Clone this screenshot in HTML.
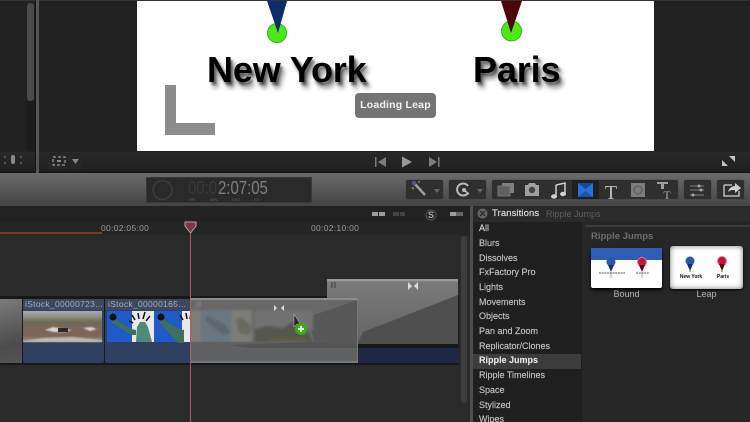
<!DOCTYPE html>
<html><head><meta charset="utf-8">
<style>
html,body{margin:0;padding:0;background:#262626}
#p{position:relative;width:750px;height:422px;overflow:hidden;background:#272727;font-family:"Liberation Sans",sans-serif;filter:blur(.35px)}
#p div,#p span{position:absolute}
.t{white-space:nowrap}
.li{left:479px;font-size:9px;color:#c4c4c4;white-space:nowrap;line-height:11px;font-weight:400;-webkit-text-stroke:.15px #c4c4c4}
.btn{background:#2f2f2f;border-radius:2px;top:180px;height:19px;box-shadow:0 0 1px #333}
.city{font-weight:700;font-size:36px;color:#000;white-space:nowrap;text-shadow:2px 3px 2px rgba(0,0,0,.5),4px 6px 5px rgba(0,0,0,.45);line-height:40px;letter-spacing:-.15px}
</style></head><body><div id="p">

<!-- viewer -->
<div style="left:0;top:0;width:750px;height:173px;background:#212122"></div>
<div style="left:0;top:0;width:750px;height:1px;background:#333"></div>
<div style="left:0;top:152px;width:750px;height:21px;background:linear-gradient(#292929,#1f1f1f)"></div>
<div style="left:0;top:171px;width:750px;height:2px;background:#161616"></div>
<div style="left:27px;top:3px;width:7px;height:98px;background:#4a4a4a;border-radius:3px"></div>
<div style="left:26px;top:101px;width:9px;height:50px;background:#1c1c1c"></div>
<div style="left:36px;top:0;width:3px;height:173px;background:#555"></div>
<div style="left:35px;top:0;width:1px;height:173px;background:#151515"></div>
<div style="left:137px;top:1px;width:517px;height:150px;background:#fff"></div>

<svg style="position:absolute;left:137px;top:0" width="517" height="150">
<circle cx="140" cy="33" r="9.5" fill="#4ce81a" stroke="#35b510" stroke-width="1"/>
<polygon points="130,1 150,1 141,33" fill="#0e2c6c"/>
<circle cx="374.500" cy="31" r="10" fill="#4ce81a" stroke="#35b510" stroke-width="1"/>
<polygon points="364,1 385,1 374,33" fill="#4c060a"/>
<path d="M28 85H39V123H78V135H28Z" fill="#8d8d8d"/>
</svg>
<div class="city" style="left:207px;top:50px">New York</div>
<div class="city" style="left:473px;top:50px">Paris</div>
<div style="left:355px;top:93px;width:81px;height:25px;background:#747474;border-radius:4px;color:#f2f2f2;font-size:10.500px;font-weight:700;line-height:25px;text-align:center;letter-spacing:.2px">Loading Leap</div>

<!-- viewer controls -->
<svg style="position:absolute;left:0;top:150px" width="750" height="24">
<rect x="11" y="5" width="4" height="9" rx="2" fill="#888"/>
<g fill="#555"><rect x="4" y="6" width="2" height="2"/><rect x="4" y="12" width="2" height="2"/><rect x="20" y="6" width="2" height="2"/><rect x="20" y="12" width="2" height="2"/></g>
<rect x="48" y="3" width="20" height="16" fill="#262626"/>
<rect x="70" y="3" width="12" height="16" fill="#262626"/>
<g fill="none" stroke="#999" stroke-width="1.200"><rect x="53" y="7" width="12" height="8" stroke-dasharray="3 2"/></g>
<rect x="57" y="10" width="4" height="2" fill="#888"/>
<polygon points="72,9 79,9 75.500,14" fill="#888"/>
<g fill="#7c7c7c">
<rect x="375" y="7" width="1.500" height="10"/><polygon points="386,7 386,17 378,12"/>
<polygon points="402,6.500 412,12 402,17.500" fill="#989898"/>
<polygon points="429,7 437,12 429,17"/><rect x="438" y="7" width="1.500" height="10"/>
</g>
<g fill="#c4c4c4"><polygon points="722,16 722,10 728,16"/><polygon points="735,6 729,6 735,12"/></g>
</svg>

<!-- toolbar -->
<div style="left:0;top:173px;width:750px;height:33px;background:linear-gradient(#6b6b6b,#444)"></div>
<div style="left:146px;top:177px;width:166px;height:26px;background:#2a2a2a;border:1px solid #383838;box-sizing:border-box"></div>
<svg style="position:absolute;left:150px;top:179px" width="30" height="24"><circle cx="12.500" cy="11" r="9.500" fill="none" stroke="#3e3e3e" stroke-width="1.500"/></svg>
<div class="t" style="left:188px;top:178px;font-size:18px;color:#3a3a3a;line-height:20px;transform:scaleX(.83);transform-origin:0 0">00:0</div>
<div class="t" style="left:218px;top:178px;font-size:18px;color:#7f7f7f;line-height:20px;transform:scaleX(.83);transform-origin:0 0">2:07:05</div>
<div class="t" style="left:189px;top:197px;font-size:4px;color:#5f5f5f;line-height:5px">HR</div>
<div class="t" style="left:210px;top:197px;font-size:4px;color:#5f5f5f;line-height:5px">MIN</div>
<div class="t" style="left:232px;top:197px;font-size:4px;color:#5f5f5f;line-height:5px">SEC</div>
<div class="t" style="left:254px;top:197px;font-size:4px;color:#5f5f5f;line-height:5px">FR</div>

<div class="btn" style="left:406px;width:37px"></div>
<div class="btn" style="left:449px;width:37px"></div>
<div class="btn" style="left:492px;width:186px"></div>
<div class="btn" style="left:684px;width:27px"></div>
<div class="btn" style="left:717px;width:27px"></div>
<div style="left:572px;top:180px;width:27px;height:19px;background:#1d1f24"></div>

<svg style="position:absolute;left:400px;top:175px" width="350" height="32">
<!-- wand -->
<path d="M14 8L25 20" stroke="#a0a0a0" stroke-width="2.500"/>
<circle cx="14" cy="8" r="2.200" fill="#6d4a90"/><circle cx="13" cy="13" r="1.300" fill="#5a8a4a"/><circle cx="19" cy="7" r="1" fill="#8a7a40"/>
<polygon points="34,14 40,14 37,18" fill="#666"/>
<!-- retime -->
<path d="M68 18A6 6 0 1 1 68 11" fill="none" stroke="#bcbcbc" stroke-width="2"/><circle cx="64" cy="15" r="2" fill="#bcbcbc"/><path d="M64 15l5 4" stroke="#bcbcbc" stroke-width="1.500"/>
<polygon points="77,14 83,14 80,18" fill="#666"/>
<!-- clips -->
<rect x="102" y="8" width="12" height="10" fill="#808080"/><rect x="98" y="11" width="12" height="10" fill="#606060" stroke="#7c7c7c" stroke-width=".8"/>
<!-- camera -->
<path d="M125 10h3l1-2h6l1 2h3v11h-14z" fill="#a0a0a0"/><circle cx="132" cy="15" r="3.200" fill="#444"/>
<!-- music -->
<path d="M156 10l9-2v10" stroke="#d0d0d0" stroke-width="1.500" fill="none"/><path d="M156 10v11" stroke="#d0d0d0" stroke-width="1.500"/>
<ellipse cx="154" cy="21.500" rx="3" ry="2.200" fill="#d0d0d0"/><ellipse cx="163" cy="19" rx="3" ry="2.200" fill="#d0d0d0"/>
<!-- transitions -->
<rect x="178" y="8" width="15" height="14" fill="#2a6fdc"/>
<polygon points="178,8 193,8 185.500,14" fill="#1a4692"/><polygon points="178,22 193,22 185.500,16" fill="#1d52a8"/>
<!-- T -->
<text x="211" y="24" text-anchor="middle" font-family="Liberation Serif,serif" font-size="20" fill="#bcbcbc">T</text>
<!-- generators -->
<rect x="231" y="8" width="14" height="14" fill="#7c7c7c"/><circle cx="238" cy="15" r="4" fill="none" stroke="#555"/>
<!-- titles -->
<path d="M257 7h11v2h-4v5h-3V9h-4z" fill="#a0a0a0"/><text x="267" y="24" text-anchor="middle" font-family="Liberation Serif,serif" font-size="12" fill="#a8a8a8">T</text>
<!-- inspector -->
<path d="M290 11h14M290 15h14M290 20h14" stroke="#808080" stroke-width="1"/>
<circle cx="299" cy="11" r="1.500" fill="#aaa"/><circle cx="293" cy="20" r="1.500" fill="#aaa"/><circle cx="301" cy="15" r="1.500" fill="#aaa"/>
<!-- share -->
<path d="M324 10h8M324 10v11h15v-5" fill="none" stroke="#bcbcbc" stroke-width="1.500"/>
<path d="M328 17c1-4 4-6 7-6V8l6 5-6 5v-3c-3 0-5 0-7 2z" fill="#d0d0d0"/>
</svg>

<!-- timeline -->
<div style="left:0;top:206px;width:471px;height:216px;background:#2a2a2a"></div>
<div style="left:0;top:206px;width:471px;height:16px;background:#222"></div>
<div style="left:0;top:222px;width:471px;height:13px;background:#252525"></div>
<div style="left:0;top:232px;width:102px;height:2px;background:#7a3d22"></div>
<div class="t" style="left:101px;top:223px;font-size:8.500px;color:#9a9a9a;line-height:11px;letter-spacing:.3px">00:02:05:00</div>
<div class="t" style="left:311px;top:223px;font-size:8.500px;color:#9a9a9a;line-height:11px;letter-spacing:.3px">00:02:10:00</div>
<div style="left:461px;top:236px;width:6px;height:167px;background:#3e3e3e;border-radius:3px"></div>

<svg style="position:absolute;left:360px;top:207px" width="110" height="16">
<g fill="#9d9d9d"><rect x="12" y="5" width="6" height="4"/><rect x="19" y="5" width="6" height="4"/></g>
<g fill="#444"><rect x="33" y="5" width="6" height="4"/><rect x="40" y="5" width="5" height="4"/></g>
<circle cx="71" cy="8" r="5" fill="none" stroke="#555"/>
<text x="71" y="11" text-anchor="middle" font-size="9" font-weight="700" font-family="Liberation Sans,sans-serif" fill="#aaa">S</text>
<g fill="#9d9d9d"><rect x="90" y="5" width="6" height="4"/></g><g fill="#666"><rect x="96" y="5" width="7" height="4"/></g>
</svg>

<!-- clips main storyline -->
<div style="left:0;top:296px;width:459px;height:69px;background:#17181b"></div>
<div style="left:0;top:299px;width:22px;height:64px;background:linear-gradient(165deg,#7c7c7c,#636363 35%,#4c4c4c 70%,#555)"></div>
<div style="left:23px;top:299px;width:81px;height:64px;background:#2f4060;border-radius:2px"></div>
<div style="left:105px;top:299px;width:90px;height:64px;background:#2f4060;border-radius:2px"></div>
<div style="left:23px;top:299px;width:81px;height:11px;background:#3c4860"></div>
<div style="left:105px;top:299px;width:90px;height:11px;background:#3c4860"></div>
<div class="t" style="left:25px;top:299px;font-size:8.500px;color:#a4aebf;line-height:11px;letter-spacing:.3px">iStock_00000723...</div>
<div class="t" style="left:108px;top:299px;font-size:8.500px;color:#a4aebf;line-height:11px;letter-spacing:.3px">iStock_00000165...</div>

<svg style="position:absolute;left:23px;top:311px" width="170" height="32">
<defs><linearGradient id="g1" x1="0" y1="0" x2="0" y2="1"><stop offset="0" stop-color="#a8acb0"/><stop offset=".2" stop-color="#8c8c80"/><stop offset=".35" stop-color="#6e6a55"/><stop offset=".5" stop-color="#7a665a"/><stop offset=".8" stop-color="#7e6658"/><stop offset="1" stop-color="#9a8e84"/></linearGradient></defs>
<g><rect width="79" height="31" fill="url(#g1)"/>
<path d="M22 19l8-3 11 2 8 1-7 2-11 0zM60 17l8-1 6 2-7 2z" fill="#d8d8d8" style="filter:blur(.8px)"/>
<path d="M35 17h10v4H35z" fill="#2c2c2c"/>
<path d="M0 30l20-3 30-1 29 3v2H0z" fill="#bfb8b0" style="filter:blur(.8px)"/></g>
<rect x="84" y="0" width="25" height="31" fill="#2159c8"/>
<rect x="109" y="0" width="22" height="31" fill="#e9e9e9"/>
<rect x="131" y="0" width="28" height="31" fill="#2159c8"/><rect x="159" y="0" width="9" height="31" fill="#e9e9e9"/>
<path d="M113 31l1-15 3-5 5 0 3 5 4 15z" fill="#4d8a78"/>
<path d="M90 7l18 11 5 1v5l-5 0L88 11z" fill="#3e7061"/><circle cx="90" cy="6" r="3.500" fill="#111"/>
<path d="M112 9l-3-5M116 8l-1-6M120 8l2-7M123 10l4-5M110 12l-4-2" stroke="#111" stroke-width="1.500"/>
<path d="M138 7l18 11 5 1v13l-6 0L136 11z" fill="#3e7061"/><circle cx="138" cy="6" r="3.500" fill="#111"/>
<path d="M160 9l-3-5M164 8l-1-6M167 8l1-6" stroke="#111" stroke-width="1.500"/>
</svg>

<!-- connected dragged clip -->
<div style="left:327px;top:279px;width:131px;height:65px;background:linear-gradient(#9a9a9a 0,#9a9a9a 1.500px,#7a7a7a 3px,#646464)"></div>
<svg style="position:absolute;left:327px;top:279px" width="131" height="65"><polygon points="131,16 131,65 30,65 36,53" fill="#4f4f4f"/></svg>
<div style="left:358px;top:348px;width:101px;height:15px;background:#1e2744"></div>

<!-- ghost overlay -->
<svg style="position:absolute;left:190px;top:298px" width="168" height="65">
<rect width="168" height="65" fill="#686868"/>
<rect width="168" height="2" fill="#8c8c8c"/>
<polygon points="168,2 168,47 125,47 118,19" fill="#585858"/>
<g style="filter:blur(1.200px)">
<rect x="0" y="12" width="11" height="32" fill="#7c7c78"/>
<rect x="11" y="12" width="30" height="32" fill="#6a7680"/>
<rect x="41" y="12" width="21" height="32" fill="#7c7c78"/>
<rect x="65" y="12" width="58" height="20" fill="#727272"/>
<path d="M17 17l18 10 6 8-8 2-18-15z" fill="#5f666c"/>
<path d="M46 22l6-3 10 10-3 8-10-2z" fill="#6a6a62"/>
<path d="M65 44V31l12-3 16 2 12-8 12 10 6 12z" fill="#565650"/>
<path d="M80 40h36v3H80z" fill="#5f6040"/>
</g>
<polygon points="0,44 125,44 168,47 168,65 0,65" fill="#5f6162"/>
<polygon points="40,47 120,44 168,47 168,50 60,50" fill="#545454"/>
<rect y="63" width="168" height="2" fill="#787878"/>
<rect x="167" width="1" height="65" fill="#777"/>
<path d="M84 7l3 3-3 3zM94 7l-3 3 3 3z" fill="#ddd"/>
<path d="M7 3v6M10 3v6" stroke="#808080" stroke-width="1.200"/>
</svg>
<svg style="position:absolute;left:327px;top:279px" width="12" height="12"><path d="M5 3v6M8 3v6" stroke="#444" stroke-width="1.200"/></svg>
<svg style="position:absolute;left:405px;top:280px" width="16" height="12"><path d="M3 2l4 4-4 4zM13 2l-4 4 4 4z" fill="#ddd"/></svg>

<svg style="position:absolute;left:290px;top:310px" width="24" height="28">
<path d="M4 4v13l3-3 3 0z" fill="#222" stroke="#ccc" stroke-width=".5"/>
<circle cx="11" cy="19" r="6" fill="#3fa814"/><path d="M11 16v6M8 19h6" stroke="#e8ffe0" stroke-width="2"/>
</svg>

<!-- playhead -->
<div style="left:189.500px;top:228px;width:1.500px;height:194px;background:#b25a68"></div>
<svg style="position:absolute;left:184px;top:220px" width="14" height="14"><path d="M1 2h11v4l-5.500 7L1 6z" fill="#7c3742" stroke="#aaa" stroke-width="1"/></svg>

<!-- right browser -->
<div style="left:471px;top:206px;width:279px;height:216px;background:#242424"></div>
<div style="left:470px;top:206px;width:3px;height:216px;background:#4e4e4e"></div>
<div style="left:473px;top:206px;width:277px;height:16px;background:#2a2a2a"></div>
<div style="left:582px;top:223px;width:168px;height:199px;background:#262626"></div>
<div style="left:473px;top:222px;width:109px;height:200px;background:#1f1f1f"></div>
<div style="left:585px;top:225px;width:165px;height:1.500px;background:#3c3c3c"></div>
<svg style="position:absolute;left:477px;top:208px" width="12" height="12"><circle cx="5.500" cy="5.500" r="5" fill="#666"/><path d="M3 3l5 5M8 3l-5 5" stroke="#2a2a2a" stroke-width="1.300"/></svg>
<div class="t" style="left:492px;top:208px;font-size:9.500px;color:#dadada;line-height:12px;font-weight:400;letter-spacing:.1px;-webkit-text-stroke:.2px #dadada">Transitions</div>
<div class="t" style="left:546px;top:208px;font-size:9px;color:#5f5f5f;line-height:12px">Ripple Jumps</div>

<div style="left:473px;top:354px;width:108px;height:15px;background:#3c3c3c"></div>
<div class="li" style="top:223px;color:#e0e0e0">All</div>
<div class="li" style="top:238px">Blurs</div>
<div class="li" style="top:253px">Dissolves</div>
<div class="li" style="top:267px">FxFactory Pro</div>
<div class="li" style="top:282px">Lights</div>
<div class="li" style="top:297px">Movements</div>
<div class="li" style="top:311px">Objects</div>
<div class="li" style="top:326px">Pan and Zoom</div>
<div class="li" style="top:341px">Replicator/Clones</div>
<div class="li" style="top:355px;color:#eee;font-weight:700">Ripple Jumps</div>
<div class="li" style="top:370px">Ripple Timelines</div>
<div class="li" style="top:385px">Space</div>
<div class="li" style="top:400px">Stylized</div>
<div class="li" style="top:414px">Wipes</div>

<div class="t" style="left:591px;top:231px;font-size:9.500px;color:#6f6f6f;font-weight:700;line-height:12px">Ripple Jumps</div>

<!-- thumbs -->
<div style="left:591px;top:248px;width:71px;height:40px;background:#fff;border-radius:2px;box-shadow:0 2px 3px #000;overflow:hidden"></div>
<div style="left:591px;top:248px;width:71px;height:12px;background:#2f5cb4;border-radius:2px 2px 0 0"></div>
<svg style="position:absolute;left:591px;top:248px" width="71" height="40">
<circle cx="20" cy="14" r="4.500" fill="#2a56b0"/><path d="M17 17l3 7 3-7z" fill="#14306a"/><path d="M20 24v6" stroke="#aaa"/>
<path d="M8 25h26" stroke="#777" stroke-width="1.200" stroke-dasharray="2 .7"/>
<circle cx="51" cy="14" r="4.500" fill="#c2153a" stroke="#e79" stroke-width="1"/><path d="M48 17l3 7 3-7z" fill="#5a0710"/><path d="M51 24v6" stroke="#aaa"/>
<path d="M45 25h13" stroke="#777" stroke-width="1.200" stroke-dasharray="2 .7"/>
</svg>
<div style="left:670px;top:246px;width:73px;height:43px;background:#fff;border-radius:3px;box-shadow:inset 0 0 6px #777,0 1px 2px #000"></div>
<svg style="position:absolute;left:670px;top:246px" width="73" height="43">
<circle cx="20" cy="15" r="4.500" fill="#2a56b0"/><path d="M17 18l3 7 3-7z" fill="#14306a"/><circle cx="20" cy="25" r="1" fill="#5c5"/>
<circle cx="52" cy="15" r="4.500" fill="#c2153a" stroke="#e79" stroke-width="1"/><path d="M49 18l3 7 3-7z" fill="#5a0710"/><circle cx="52" cy="25" r="1" fill="#5c5"/>
<text x="21" y="32" text-anchor="middle" font-size="5" font-weight="700" font-family="Liberation Sans,sans-serif" fill="#111">New York</text>
<text x="53" y="32" text-anchor="middle" font-size="5" font-weight="700" font-family="Liberation Sans,sans-serif" fill="#111">Paris</text>
</svg>
<div class="t" style="left:591px;width:71px;top:289px;font-size:9px;color:#b5b5b5;text-align:center;line-height:11px">Bound</div>
<div class="t" style="left:670px;width:73px;top:289px;font-size:9px;color:#b5b5b5;text-align:center;line-height:11px">Leap</div>

</div></body></html>
